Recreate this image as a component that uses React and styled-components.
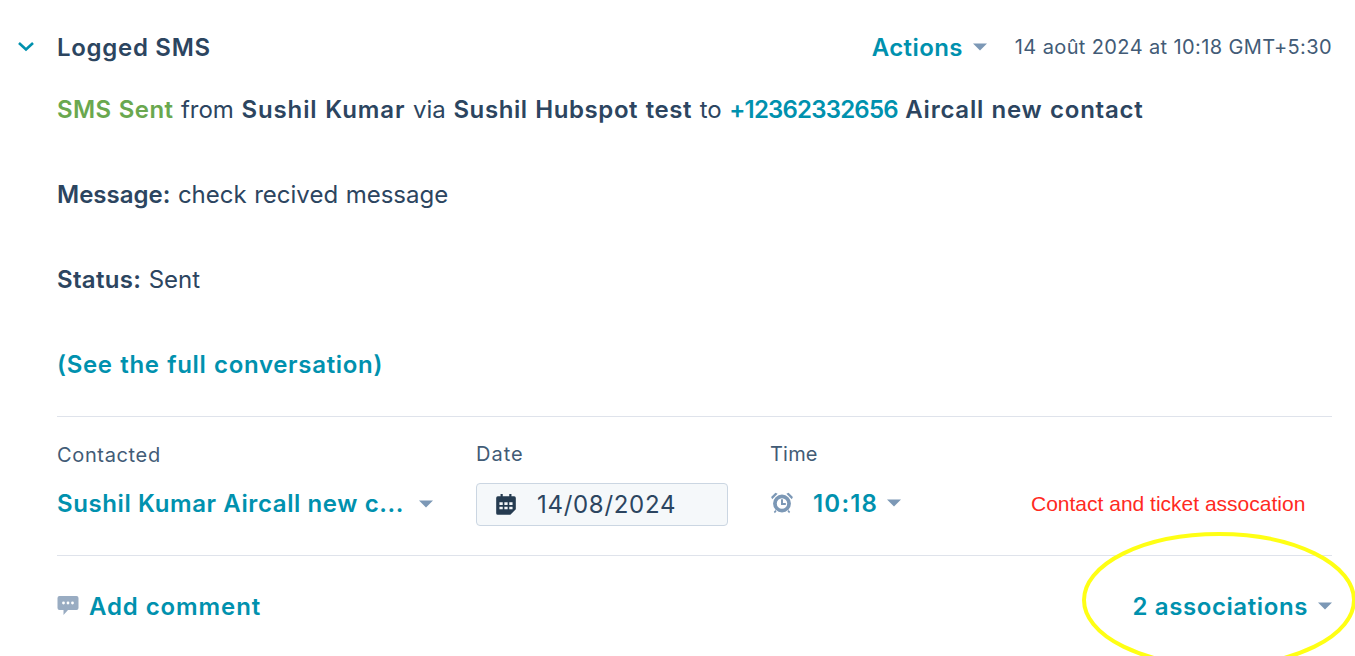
import styled, { createGlobalStyle } from 'styled-components';

const GlobalStyle = createGlobalStyle`
  html, body {
    margin: 0;
    padding: 0;
    background: #fff;
    overflow: hidden;
  }
  body {
    font-family: Inter, Lato, sans-serif;
    color: #2c4560;
  }
`

function Caret() {
  return (
    <CaretIcon viewBox="0 0 14 8">
      <path d="M0 0.5h14L7 7.5z" fill="#7c98b6" />
    </CaretIcon>
  )
}

function App() {
  return (
    <Card>
      <GlobalStyle />
      <Header>
        <Chevron viewBox="0 0 18 11">
          <path d="M2 2l7 6.5L16 2" fill="none" stroke="#0091ae" strokeWidth="2.6" />
        </Chevron>
        <Title>Logged SMS</Title>
        <HeaderRight>
          <ActionsLink>Actions<Caret /></ActionsLink>
          <Stamp>14 août 2024 at 10:18 GMT+5:30</Stamp>
        </HeaderRight>
      </Header>

      <Body>
        <Line>
          <Green>SMS Sent</Green> from <Strong $track={0.9}>Sushil Kumar</Strong> via <Strong $track={0.6}>Sushil Hubspot test</Strong> to <Teal $track={-0.8}>+12362332656</Teal> <Strong $track={0.75}>Aircall new contact</Strong>
        </Line>
        <Line><Strong>Message:</Strong> check recived message</Line>
        <Line><Strong $track={0.3}>Status:</Strong> Sent</Line>
        <Line><Teal $track={0.68}>(See the full conversation)</Teal></Line>
      </Body>

      <Fields>
        <ContactField>
          <Label $track={0.65}>Contacted</Label>
          <ContactValue><Teal $track={0.6}>Sushil Kumar Aircall new c...</Teal><Caret /></ContactValue>
        </ContactField>
        <DateField>
          <Label $track={1}>Date</Label>
          <DateInput>
            <svg width="22" height="24" viewBox="0 0 20 22">
              <path d="M5 1h2v2h6V1h2v2h2.5A1.5 1.5 0 0 1 19 4.5V15l-5 5H2.5A1.5 1.5 0 0 1 1 18.5v-14A1.5 1.5 0 0 1 2.5 3H5z" fill="#253b50" />
              <path d="M4 8.5h3v2.500H4zM8.500 8.500h3v2.500h-3zM13 8.500h3v2.500h-3zM4 12.500h3V15H4zM8.500 12.500h3V15h-3zM13 12.500h3V15h-3z" fill="#f5f8fa" />
            </svg>
            14/08/2024
          </DateInput>
        </DateField>
        <TimeField>
          <Label $track={0.2}>Time</Label>
          <TimeValue>
            <svg width="24" height="24" viewBox="0 0 22 22">
              <circle cx="11" cy="11.500" r="6.500" fill="#fff" stroke="#7c98b6" strokeWidth="3.400" />
              <path d="M11 7.500v4.500h3.500" fill="none" stroke="#7c98b6" strokeWidth="1.800" />
              <path d="M1 5.500L5 1.500 7 2.500 2 7.500zM21 5.500L17 1.500 15 2.500 20 7.500z" fill="#7c98b6" />
              <path d="M3.500 19l1.500-1.500 1 1-1.500 2zM18.500 19L17 17.500l-1 1 1.500 2z" fill="#7c98b6" />
            </svg>
            <Teal $track={1.2}>10:18</Teal>
            <Caret />
          </TimeValue>
        </TimeField>
        <Note>Contact and ticket assocation</Note>
      </Fields>

      <Footer>
        <AddComment>
          <svg width="22" height="20" viewBox="0 0 22 20">
            <path d="M2.500 0h17A2 2 0 0 1 21.500 2v10a2 2 0 0 1-2 2H11l-4.500 5v-5h-4a2 2 0 0 1-2-2V2a2 2 0 0 1 2-2z" fill="#99acc2" />
            <circle cx="6.500" cy="7" r="1.400" fill="#fff" />
            <circle cx="11" cy="7" r="1.400" fill="#fff" />
            <circle cx="15.500" cy="7" r="1.400" fill="#fff" />
          </svg>
          Add comment
        </AddComment>
        <Associations>2 associations<Caret /></Associations>
      </Footer>

      <Highlight viewBox="0 0 280 130">
        <ellipse cx="137" cy="68" rx="135" ry="66" fill="none" stroke="#ffff14" strokeWidth="4" />
      </Highlight>
    </Card>
  )
}

const Card = styled.div`
  position: relative;
  width: 1355px;
  height: 656px;
  box-sizing: border-box;
  padding: 0 23px 0 57px;
  overflow: hidden;
`
const Header = styled.div`
  position: relative;
  display: flex;
  align-items: center;
  justify-content: space-between;
  height: 28px;
  padding-top: 33px;
`
const Chevron = styled.svg`
  position: absolute;
  left: -40px;
  top: 41px;
  width: 18px;
  height: 11px;
`
const Title = styled.div`
  font-size: 24px;
  font-weight: 600;
  letter-spacing: 0.7px;
`
const HeaderRight = styled.div`
  display: flex;
  align-items: center;
  gap: 28px;
`
const ActionsLink = styled.div`
  display: flex;
  align-items: center;
  gap: 10px;
  font-size: 24px;
  font-weight: 600;
  color: #0091ae;
  letter-spacing: 0.4px;
`
const Stamp = styled.div`
  font-size: 20px;
  color: #425b76;
  letter-spacing: 0.38px;
`
const CaretIcon = styled.svg`
  width: 14px;
  height: 8px;
  flex: none;
`
const Body = styled.div`
  display: flex;
  flex-direction: column;
  gap: 55px;
  margin-top: 34px;
  padding-bottom: 36px;
  border-bottom: 1px solid #dfe3eb;
`
const Line = styled.div`
  font-size: 24px;
  line-height: 30px;
  white-space: nowrap;
  word-spacing: 0.8px;
`
const Strong = styled.span`
  font-weight: 600;
  letter-spacing: ${p => p.$track || 0}px;
`
const Green = styled.span`
  color: #6aa84f;
  font-weight: 600;
  letter-spacing: 0.4px;
`
const Teal = styled.span`
  color: #0091ae;
  font-weight: 600;
  letter-spacing: ${p => p.$track || 0}px;
`
const Fields = styled.div`
  display: flex;
  height: 139px;
  box-sizing: border-box;
  padding-top: 25px;
  border-bottom: 1px solid #dfe3eb;
`
const ContactField = styled.div`
  width: 419px;
`
const DateField = styled.div`
  width: 294px;
  margin-top: -1px;
`
const TimeField = styled.div`
  width: 261px;
  margin-top: -1px;
`
const Label = styled.div`
  font-size: 20px;
  line-height: 26px;
  color: #425b76;
  letter-spacing: ${p => p.$track || 0}px;
`
const ContactValue = styled.div`
  display: flex;
  align-items: center;
  gap: 15px;
  margin-top: 21px;
  font-size: 24px;
  line-height: 30px;
  white-space: nowrap;
`
const DateInput = styled.div`
  display: flex;
  align-items: center;
  gap: 20px;
  width: 252px;
  height: 43px;
  box-sizing: border-box;
  margin-top: 16px;
  padding-left: 18px;
  border: 1px solid #cbd6e2;
  border-radius: 4px;
  background: #f5f8fa;
  font-size: 24px;
  color: #2c4560;
  letter-spacing: 0.7px;
`
const TimeValue = styled.div`
  display: flex;
  align-items: center;
  gap: 18px;
  margin-top: 19px;
  height: 34px;
  font-size: 24px;
  svg:first-child { margin-right: 1px; }
  svg:last-child { margin-left: -9px; }
`
const Note = styled.div`
  align-self: flex-start;
  margin-top: 50px;
  font-family: "Liberation Sans", Arial, sans-serif;
  font-size: 21px;
  color: #ff2a1f;
  white-space: nowrap;
`
const Footer = styled.div`
  display: flex;
  align-items: center;
  justify-content: space-between;
  height: 100px;
`
const AddComment = styled.div`
  display: flex;
  align-items: center;
  gap: 10px;
  font-size: 24px;
  font-weight: 600;
  color: #0091ae;
  letter-spacing: 0.9px;
`
const Associations = styled.div`
  display: flex;
  align-items: center;
  gap: 10px;
  font-size: 24px;
  font-weight: 600;
  color: #0091ae;
  letter-spacing: 0.6px;
`
const Highlight = styled.svg`
  position: absolute;
  left: 1082px;
  top: 532px;
  width: 280px;
  height: 130px;
  pointer-events: none;
`

export default App
